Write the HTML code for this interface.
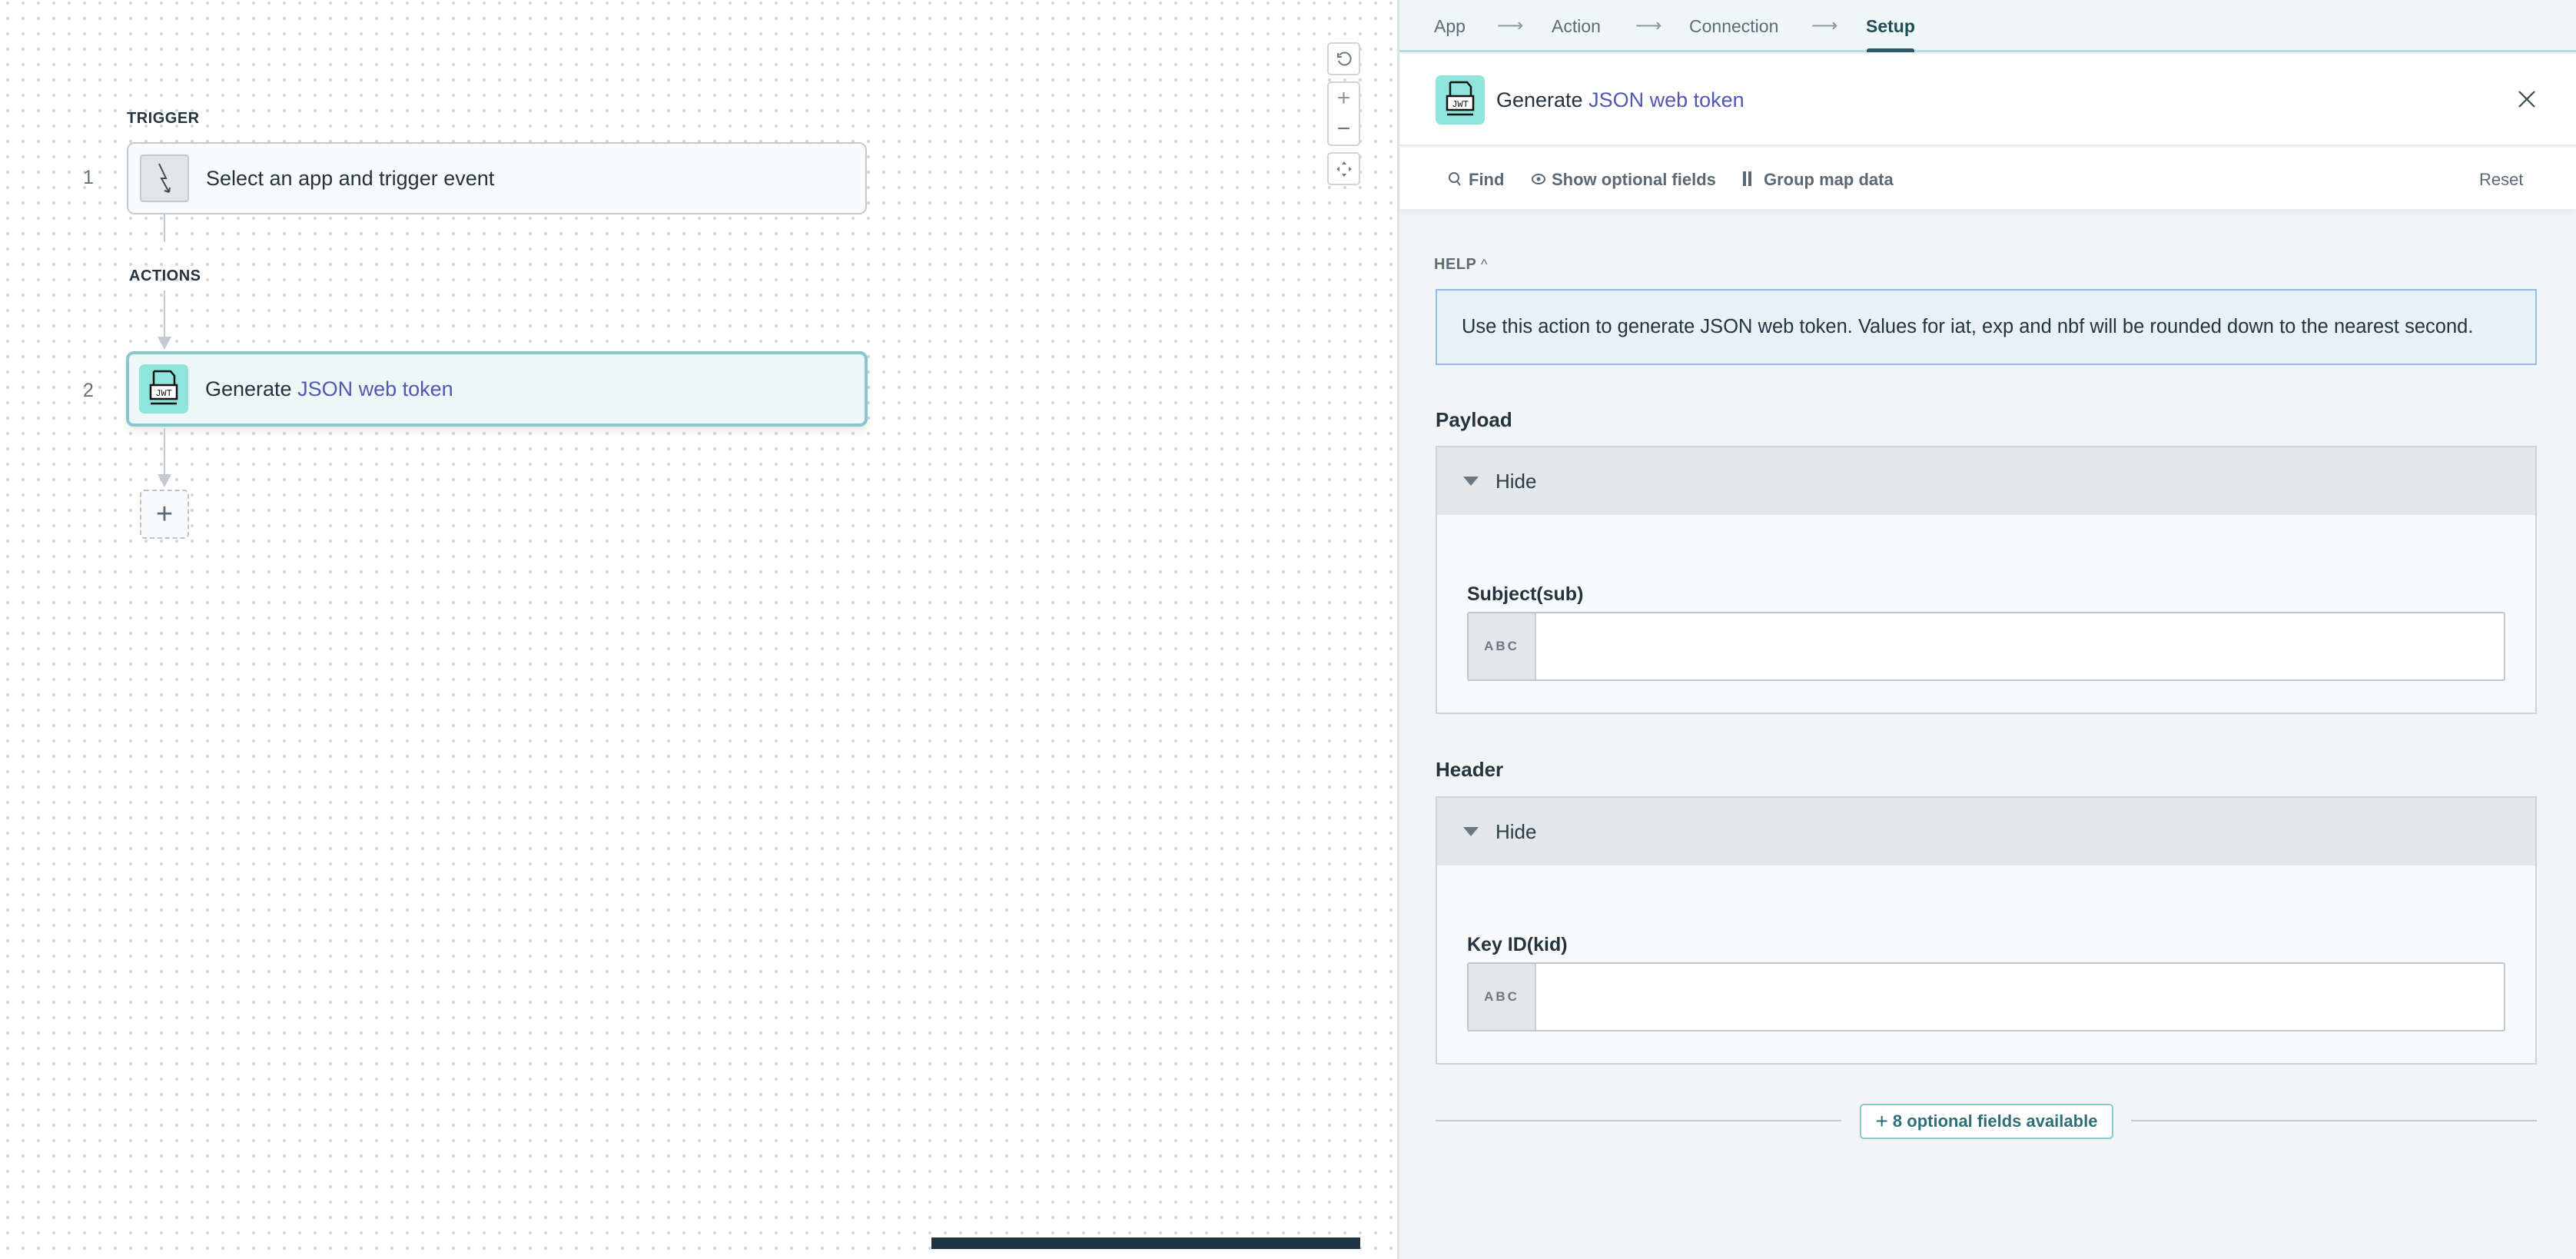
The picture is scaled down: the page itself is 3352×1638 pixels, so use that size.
<!DOCTYPE html>
<html><head><meta charset="utf-8"><style>
*{box-sizing:border-box;margin:0;padding:0}
body{width:3352px;height:1638px;overflow:hidden;position:relative;font-family:"Liberation Sans",sans-serif;color:#24343f;background:#fff}
.abs{position:absolute}
#canvas{left:0;top:0;width:1818px;height:1638px;background-color:#fff;background-image:radial-gradient(circle,#d3d8dc 2px,transparent 2.3px);background-size:20px 20px;background-position:0 -6px}
.lbl{font-weight:bold;font-size:20px;color:#24343f;letter-spacing:0.5px}
.card{border-radius:10px;display:flex;align-items:center}
.num{font-size:25px;color:#66727b}
.ctl{left:1727px;width:43px;background:#fff;border:2px solid #cfd4d9;border-radius:5px;display:flex;align-items:center;justify-content:center;color:#6a7680}
#panel{left:1818px;top:0;width:1534px;height:1638px;background:#f2f4f6;border-left:3px solid #dde2e6}
.tab{top:21px;font-size:23px;color:#5c6b76}
.arr{top:19px;font-size:24px;color:#8c98a1}
.tb{top:221px;font-size:22px;font-weight:bold;color:#5a6973}
.sec{font-size:26px;font-weight:bold;color:#24343f}
.box{left:1868px;width:1433px;border:2px solid #cdd3d8;background:#f8fafb}
.hd{height:88px;background:#e3e7ea;display:flex;align-items:center;padding-left:34px;font-size:26px;color:#2c3c47}
.tri{width:0;height:0;border-left:10px solid transparent;border-right:10px solid transparent;border-top:12px solid #6a7782;margin-right:22px}
.inp{left:39px;width:1351px;height:90px;border:2px solid #bfc6cc;border-radius:3px;background:#fff;display:flex}
.abc{width:88px;background:#e3e7ea;border-right:2px solid #c8ced3;display:flex;align-items:center;justify-content:center;font-size:17px;font-weight:bold;color:#6c7882;letter-spacing:3px}
</style></head><body>
<div id="canvas" class="abs"></div>

<div class="abs lbl" style="left:165px;top:143px">TRIGGER</div>
<div class="abs num" style="left:108px;top:217px">1</div>
<div class="abs card" style="left:165px;top:185px;width:963px;height:94px;border:2px solid #c3cad0;background:#f8fafb">
  <div style="margin-left:15px;width:64px;height:62px;border:2px solid #c3cad0;border-radius:4px;background:#e2e6e9;display:flex;align-items:center;justify-content:center">
    <svg width="30" height="44" viewBox="0 0 30 44"><path d="M8 3 L17 22 L11 22 L21 40 M21 40 l-6 -2 M21 40 l1 -6" stroke="#3d4b55" stroke-width="2" fill="none"/></svg>
  </div>
  <div style="margin-left:22px;font-size:27px;color:#24343f">Select an app and trigger event</div>
</div>
<div class="abs" style="left:213px;top:279px;width:2px;height:36px;background:#c3cad0"></div>
<div class="abs lbl" style="left:168px;top:348px">ACTIONS</div>
<div class="abs" style="left:213px;top:378px;width:2px;height:70px;background:#c3cad0"></div>
<div class="abs" style="left:205px;top:438px;width:0;height:0;border-left:9px solid transparent;border-right:9px solid transparent;border-top:17px solid #c3cad0"></div>
<div class="abs num" style="left:108px;top:494px">2</div>
<div class="abs card" style="left:164px;top:457px;width:965px;height:98px;border:4px solid #85c9cd;background:#eef7f8;box-shadow:0 6px 10px rgba(0,0,0,0.08)">
  <div style="margin-left:13px;width:64px;height:64px;border-radius:7px;background:#8fe4dc;display:flex;align-items:center;justify-content:center">
    <svg width="44" height="50" viewBox="0 0 44 50"><path d="M9 2 H31 L36 8 V20" stroke="#111" stroke-width="2.5" fill="none"/><path d="M9 2 V20" stroke="#111" stroke-width="2.5"/><rect x="5" y="20" width="34" height="18" fill="#fff" stroke="#111" stroke-width="2.5"/><text x="22" y="34" font-size="12" font-family="Liberation Mono" text-anchor="middle" fill="#111">JWT</text><path d="M5 44 H39" stroke="#111" stroke-width="2.5"/></svg>
  </div>
  <div style="margin-left:22px;font-size:27px;color:#24343f">Generate <span style="color:#5058b0">JSON web token</span></div>
</div>
<div class="abs" style="left:213px;top:557px;width:2px;height:66px;background:#c3cad0"></div>
<div class="abs" style="left:205px;top:617px;width:0;height:0;border-left:9px solid transparent;border-right:9px solid transparent;border-top:17px solid #c3cad0"></div>
<div class="abs" style="left:182px;top:637px;width:64px;height:64px;border:2px dashed #bcc3c9;border-radius:6px;background:#f8fafb;display:flex;align-items:center;justify-content:center;font-size:38px;color:#5d6a74;font-weight:300">+</div>

<div class="abs ctl" style="top:55px;height:43px"><svg width="22" height="22" viewBox="0 0 22 22"><path d="M5 6 A8 8 0 1 1 4 13" stroke="#6a7680" stroke-width="2" fill="none"/><path d="M3 3 V8 H8" stroke="#6a7680" stroke-width="2" fill="none"/></svg></div>
<div class="abs ctl" style="top:106px;height:84px;flex-direction:column">
  <div style="height:40px;line-height:40px;font-size:30px;color:#8a959e">+</div>
  <div style="width:24px;height:2px;background:#d8dde1"></div>
  <div style="height:40px;line-height:40px;font-size:30px;color:#6a7680">−</div>
</div>
<div class="abs ctl" style="top:198px;height:43px"><svg width="24" height="24" viewBox="0 0 24 24" fill="#6a7680"><path d="M12 2 L15 6 H9Z M12 22 L9 18 H15Z M2 12 L6 9 V15Z M22 12 L18 15 V9Z"/></svg></div>

<div class="abs" style="left:1212px;top:1610px;width:558px;height:15px;background:#1f3340"></div>
<div class="abs" style="left:1212px;top:1625px;width:558px;height:13px;background:#fff"></div>

<div id="panel" class="abs"></div>
<div class="abs" style="left:1821px;top:0;width:1531px;height:68px;background:#eef6f8;border-bottom:3px solid #b5dde0"></div>
<div class="abs tab" style="left:1866px">App</div>
<div class="abs arr" style="left:1948px">⟶</div>
<div class="abs tab" style="left:2019px">Action</div>
<div class="abs arr" style="left:2128px">⟶</div>
<div class="abs tab" style="left:2198px">Connection</div>
<div class="abs arr" style="left:2357px">⟶</div>
<div class="abs tab" style="left:2428px;color:#1f4d57;font-weight:bold">Setup</div>
<div class="abs" style="left:2429px;top:63px;width:62px;height:5px;background:#2a5a63;border-radius:3px 3px 0 0"></div>

<div class="abs" style="left:1821px;top:70px;width:1531px;height:120px;background:#fff;border-bottom:2px solid #e4e8eb"></div>
<div class="abs" style="left:1868px;top:98px;width:64px;height:64px;border-radius:7px;background:#8fe4dc;display:flex;align-items:center;justify-content:center">
  <svg width="44" height="50" viewBox="0 0 44 50"><path d="M9 2 H31 L36 8 V20" stroke="#111" stroke-width="2.5" fill="none"/><path d="M9 2 V20" stroke="#111" stroke-width="2.5"/><rect x="5" y="20" width="34" height="18" fill="#fff" stroke="#111" stroke-width="2.5"/><text x="22" y="34" font-size="12" font-family="Liberation Mono" text-anchor="middle" fill="#111">JWT</text><path d="M5 44 H39" stroke="#111" stroke-width="2.5"/></svg>
</div>
<div class="abs" style="left:1947px;top:115px;font-size:27px;color:#24343f">Generate <span style="color:#5058b0">JSON web token</span></div>
<svg class="abs" style="left:3276px;top:117px" width="24" height="24" viewBox="0 0 24 24"><path d="M2 2 L22 22 M22 2 L2 22" stroke="#3d4b55" stroke-width="2.2"/></svg>

<div class="abs" style="left:1821px;top:192px;width:1531px;height:80px;background:#fff;box-shadow:0 4px 8px rgba(0,0,0,0.06)"></div>
<svg class="abs" style="left:1884px;top:223px" width="18" height="20" viewBox="0 0 18 20"><circle cx="8" cy="8" r="6" stroke="#5a6973" stroke-width="2" fill="none"/><path d="M12 13 L16 18" stroke="#5a6973" stroke-width="2"/></svg>
<div class="abs tb" style="left:1911px">Find</div>
<svg class="abs" style="left:1992px;top:224px" width="20" height="18" viewBox="0 0 20 18"><ellipse cx="10" cy="9" rx="8" ry="6" stroke="#5a6973" stroke-width="2" fill="none"/><circle cx="10" cy="9" r="2.5" fill="#5a6973"/></svg>
<div class="abs tb" style="left:2019px">Show optional fields</div>
<div class="abs" style="left:2268px;top:223px;width:4px;height:19px;background:#5a6973"></div>
<div class="abs" style="left:2275px;top:223px;width:4px;height:19px;background:#5a6973"></div>
<div class="abs tb" style="left:2295px">Group map data</div>
<div class="abs tb" style="left:3226px;font-weight:normal;color:#5a6973">Reset</div>

<div class="abs" style="left:1866px;top:333px;font-size:20px;font-weight:bold;color:#5e6c76;letter-spacing:0.5px">HELP <span style="font-weight:normal;font-size:18px">^</span></div>
<div class="abs" style="left:1868px;top:376px;width:1433px;height:99px;background:#e8f0f8;border:2px solid #93bde9;display:flex;align-items:center;padding-left:32px;font-size:25.5px;color:#24343f">Use this action to generate JSON web token. Values for iat, exp and nbf will be rounded down to the nearest second.</div>

<div class="abs sec" style="left:1868px;top:531px">Payload</div>
<div class="abs box" style="top:580px;height:349px">
  <div class="hd"><div class="tri"></div>Hide</div>
  <div class="abs sec" style="left:39px;top:177px;font-size:25px">Subject(sub)</div>
  <div class="abs inp" style="top:214px"><div class="abc">ABC</div></div>
</div>

<div class="abs sec" style="left:1868px;top:986px">Header</div>
<div class="abs box" style="top:1036px;height:349px">
  <div class="hd"><div class="tri"></div>Hide</div>
  <div class="abs sec" style="left:39px;top:177px;font-size:25px">Key ID(kid)</div>
  <div class="abs inp" style="top:214px"><div class="abc">ABC</div></div>
</div>

<div class="abs" style="left:1868px;top:1457px;width:528px;height:2px;background:#c3cad0"></div>
<div class="abs" style="left:2773px;top:1457px;width:528px;height:2px;background:#c3cad0"></div>
<div class="abs" style="left:2420px;top:1436px;width:330px;height:46px;border:2px solid #85c9cd;border-radius:5px;background:#fff;display:flex;align-items:center;justify-content:center;font-size:22px;font-weight:bold;color:#2f6f78"><span style="font-size:28px;font-weight:normal;margin-right:6px">+</span>8 optional fields available</div>
</body></html>
